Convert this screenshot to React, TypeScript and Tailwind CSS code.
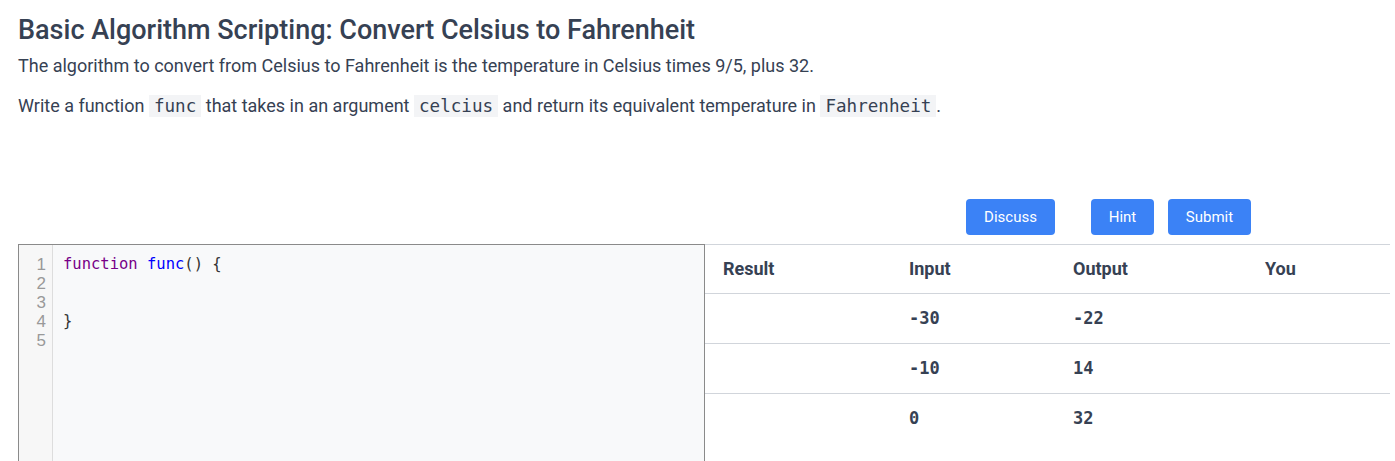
import React from 'react';

const rows = [
  { input: '-30', output: '-22' },
  { input: '-10', output: '14' },
  { input: '0', output: '32' },
];

const codeLines = [1, 2, 3, 4, 5];

function InlineCode({ children }: { children: React.ReactNode }) {
  return (
    <code className="bg-[#f3f4f6] px-[5px] py-[1px] text-[17.6px] leading-none text-gray-700 font-['DejaVu_Sans_Mono',monospace]">
      {children}
    </code>
  );
}

export default function App() {
  return (
    <div className="min-h-[461px] bg-white pl-[18px] pr-[5px] text-gray-700 font-['Roboto',sans-serif]">
      <h1 className="pt-[14px] text-[27px] font-medium leading-[32px]">
        Basic Algorithm Scripting: Convert Celsius to Fahrenheit
      </h1>
      <p className="mt-[8px] text-[18px] leading-6">
        The algorithm to convert from Celsius to Fahrenheit is the temperature in Celsius times 9/5, plus 32.
      </p>
      <p className="mt-[16px] text-[18px] leading-6">
        Write a function <InlineCode>func</InlineCode> that takes in an argument <InlineCode>celcius</InlineCode> and
        return its equivalent temperature in <InlineCode>Fahrenheit</InlineCode>.
      </p>

      <div className="mt-[81px] flex pl-[948px] text-[15px] text-white">
        <button className="h-9 w-[89px] rounded bg-[#3b82f6]">Discuss</button>
        <button className="ml-[36px] h-9 w-[63px] rounded bg-[#3b82f6]">Hint</button>
        <button className="ml-[14px] h-9 w-[83px] rounded bg-[#3b82f6]">Submit</button>
      </div>

      <div className="mt-[9px] flex">
        {/* editor */}
        <div className="flex h-[320px] w-[687px] shrink-0 border border-[#8a8a8a] bg-[#f8f9fa]">
          <div className="w-[34px] shrink-0 border-r border-[#dddddd] bg-[#f7f7f7] pr-[6px] pt-[10px] text-right text-[17px] leading-[19px] text-[#999999] font-['Liberation_Sans',sans-serif]">
            {codeLines.map((n) => (
              <div key={n}>{n}</div>
            ))}
          </div>
          <div className="pl-[10px] pt-[10px] text-[15.5px] leading-[19px] text-[#333333] font-['DejaVu_Sans_Mono',monospace]">
            <div>
              <span className="text-[#770088]">function</span> <span className="text-[#0000ff]">func</span>() {'{'}
            </div>
            <div>&nbsp;</div>
            <div>&nbsp;</div>
            <div>{'}'}</div>
            <div>&nbsp;</div>
          </div>
        </div>

        {/* results table */}
        <div className="flex-1 border-t border-[#d1d5db]">
          <div className="grid h-[49px] grid-cols-[186px_164px_192px_1fr] items-center border-b border-[#d1d5db] pb-[2px] text-[18px] font-bold">
            <div className="pl-[18px]">Result</div>
            <div className="pl-[18px]">Input</div>
            <div className="pl-[18px]">Output</div>
            <div className="pl-[18px]">You</div>
          </div>
          {rows.map((r, i) => (
            <div
              key={r.input}
              className={`grid h-[50px] grid-cols-[186px_164px_192px_1fr] items-center text-[17px] font-bold font-['DejaVu_Sans_Mono',monospace] ${
                i < rows.length - 1 ? 'border-b border-[#d1d5db]' : ''
              }`}
            >
              <div className="pl-[18px]"></div>
              <div className="pl-[18px]">{r.input}</div>
              <div className="pl-[18px]">{r.output}</div>
              <div className="pl-[18px]"></div>
            </div>
          ))}
        </div>
      </div>
    </div>
  );
}
